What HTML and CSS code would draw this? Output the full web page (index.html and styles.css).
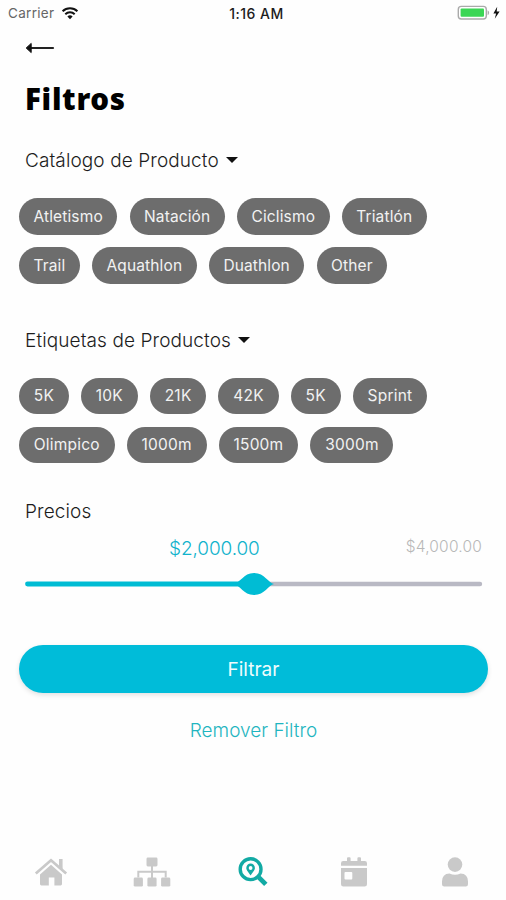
FILE: index.html
```
<!DOCTYPE html>
<html lang="es">
<head>
    <meta charset="UTF-8">
    <meta name="viewport" content="width=device-width, initial-scale=1.0">
    <title>Filtros</title>
    <link rel="stylesheet" href="styles.css">
</head>
<body>
    <div class="status-bar">
        <div class="status-left">
            <span class="carrier">Carrier</span>
            <svg class="wifi" width="18" height="14" viewBox="0 0 18 14">
                <path d="M1.6 5.2a10.6 10.6 0 0 1 14.8 0M4.3 8.2a6.8 6.8 0 0 1 9.4 0" fill="none" stroke="#111" stroke-width="2"/>
                <path d="M9 13.2l-2.6-2.7a3.7 3.7 0 0 1 5.2 0z" fill="#111"/>
            </svg>
        </div>
        <span class="time">1:16 AM</span>
        <div class="status-right">
            <svg width="44" height="16" viewBox="0 0 44 16">
                <rect x="1.3" y="1.4" width="28" height="12.6" rx="3" fill="#fff" stroke="#aaa" stroke-width="1.4"/>
                <rect x="3.6" y="3.6" width="23.4" height="8.2" rx="1" fill="#3bd655"/>
                <path d="M30.6 5.2q1.5.8 1.5 2.5t-1.5 2.5z" fill="#aaa"/>
                <path d="M40.2 1.8L36.4 8.4h2.7l-1.3 5.4 4.8-7.2h-2.9z" fill="#111"/>
            </svg>
        </div>
    </div>

    <main class="content">
        <a href="#" class="back" aria-label="Volver">
            <svg width="30" height="12" viewBox="0 0 30 12">
                <path d="M5 6h23" stroke="#222" stroke-width="2.2" stroke-linecap="round"/>
                <path d="M1.2 6L6.2 1.4v9.2z" fill="#111" stroke="#111" stroke-linejoin="round"/>
            </svg>
        </a>

        <h1 class="title">Filtros</h1>

        <section class="group">
            <h2 class="group-title">Catálogo de Producto <span class="caret"></span></h2>
            <div class="chips">
                <button class="chip">Atletismo</button>
                <button class="chip">Natación</button>
                <button class="chip">Ciclismo</button>
                <button class="chip">Triatlón</button>
                <button class="chip">Trail</button>
                <button class="chip">Aquathlon</button>
                <button class="chip">Duathlon</button>
                <button class="chip">Other</button>
            </div>
        </section>

        <section class="group tags">
            <h2 class="group-title">Etiquetas de Productos <span class="caret"></span></h2>
            <div class="chips">
                <button class="chip">5K</button>
                <button class="chip">10K</button>
                <button class="chip">21K</button>
                <button class="chip">42K</button>
                <button class="chip">5K</button>
                <button class="chip">Sprint</button>
                <button class="chip">Olimpico</button>
                <button class="chip">1000m</button>
                <button class="chip">1500m</button>
                <button class="chip">3000m</button>
            </div>
        </section>

        <section class="prices">
            <h2 class="group-title">Precios</h2>
            <div class="price-labels">
                <span class="price-current">$2,000.00</span>
                <span class="price-max">$4,000.00</span>
            </div>
            <svg class="slider" width="458" height="24" viewBox="0 0 458 24">
                <path d="M229 12h226" stroke="#b9b9c4" stroke-width="4.4" stroke-linecap="round"/>
                <path d="M2.5 12h226" stroke="#00bcd4" stroke-width="4.8" stroke-linecap="round"/>
                <path d="M208 12C216 11 218 1 229 1s14 10 20 11c-6 1-9 11-20 11s-13-10-21-11z" fill="#00bcd4"/>
            </svg>
        </section>

        <button class="apply">Filtrar</button>
        <a href="#" class="remove">Remover Filtro</a>
    </main>

    <nav class="tab-bar">
        <a href="#" class="tab" aria-label="Inicio">
            <svg width="34" height="32" viewBox="0 0 34 32">
                <path d="M1.8 17.5L17 4.2l15.2 13.3" fill="none" stroke="currentColor" stroke-width="2.7"/>
                <path d="M25 3h3.6v10.5L25 10.4z" fill="currentColor"/>
                <path d="M17 8.8l11 9.6V28q0 1.4-1.4 1.4h-6.2v-8h-5.6v8H7.4Q6 29.4 6 28v-9.6z" fill="currentColor"/>
            </svg>
        </a>
        <a href="#" class="tab" aria-label="Categorías">
            <svg width="38" height="32" viewBox="0 0 38 32">
                <rect x="13.5" y="1.5" width="11" height="9" rx="1.4" fill="currentColor"/>
                <path d="M19 10v12M5.3 21.5v-5.8h27.4v5.8" fill="none" stroke="currentColor" stroke-width="2"/>
                <rect x=".7" y="21.6" width="9.2" height="9" rx="1.4" fill="currentColor"/>
                <rect x="14.4" y="21.6" width="9.2" height="9" rx="1.4" fill="currentColor"/>
                <rect x="28.1" y="21.6" width="9.2" height="9" rx="1.4" fill="currentColor"/>
            </svg>
        </a>
        <a href="#" class="tab active" aria-label="Buscar">
            <svg width="30" height="32" viewBox="0 0 30 32">
                <circle cx="12.6" cy="13.2" r="10.4" fill="none" stroke="currentColor" stroke-width="3.4"/>
                <path d="M20.8 21.4l7 7" stroke="currentColor" stroke-width="4.8"/>
                <path fill-rule="evenodd" d="M12.6 7.6a4.3 4.3 0 0 1 4.3 4.3c0 2.6-2.6 4.3-4.3 7.6-1.7-3.3-4.3-5-4.3-7.6a4.3 4.3 0 0 1 4.3-4.3zm0 2.5a1.9 1.9 0 1 0 0 3.8 1.9 1.9 0 0 0 0-3.8z" fill="currentColor"/>
            </svg>
        </a>
        <a href="#" class="tab" aria-label="Eventos">
            <svg width="28" height="32" viewBox="0 0 28 32">
                <path d="M1 9.8V7.2Q1 5 3.2 5H7V2.3Q7 1.3 8 1.3h1.6q1 0 1 1V5h6.8V2.3q0-1 1-1H20q1 0 1 1V5h3.8Q27 5 27 7.2v2.6z" fill="currentColor"/>
                <path fill-rule="evenodd" d="M1 12h26v16.2q0 2.4-2.4 2.4H3.4Q1 30.6 1 28.2zM5.4 16q-.9 0-.9.9v5.6q0 .9.9.9h6q.9 0 .9-.9v-5.6q0-.9-.9-.9z" fill="currentColor"/>
            </svg>
        </a>
        <a href="#" class="tab" aria-label="Perfil">
            <svg width="28" height="32" viewBox="0 0 28 32">
                <circle cx="14" cy="8.6" r="7.3" fill="currentColor"/>
                <path d="M8.5 17.5q5.5 2.4 11 0Q27 17.8 27 25.5v2.8q0 2.3-2.3 2.3H3.3Q1 30.6 1 28.3v-2.8q0-7.7 7.5-8z" fill="currentColor"/>
            </svg>
        </a>
    </nav>
</body>
</html>
```
FILE: styles.css
```
* {
    margin: 0;
    padding: 0;
    box-sizing: border-box;
}

body {
    display: flex;
    flex-direction: column;
    width: 506px;
    height: 900px;
    background-color: #fefefe;
    color: #1c1c1c;
    font-family: Inter, "Liberation Sans", sans-serif;
    overflow: hidden;
}

a {
    text-decoration: none;
}

svg {
    display: block;
}

button {
    border: none;
    font-family: inherit;
    cursor: pointer;
}

.status-bar {
    display: grid;
    grid-template-columns: 1fr auto 1fr;
    align-items: center;
    height: 26px;
    padding: 0 5px 0 8px;
    font-size: 13.5px;
}

.status-left {
    display: flex;
    align-items: center;
    gap: 7px;
}

.carrier {
    color: #666;
    letter-spacing: 0.3px;
}

.time {
    padding-left: 4px;
    font-size: 14px;
    font-weight: 500;
    letter-spacing: 0.5px;
}

.status-right {
    display: flex;
    justify-content: flex-end;
}

.content {
    display: flex;
    flex-direction: column;
    padding: 0 18px 0 19px;
}

.back {
    margin: 16px 0 0 6px;
}

.title {
    margin: 24px 0 0 6px;
    font-family: "Noto Sans", sans-serif;
    font-size: 29.5px;
    font-weight: 900;
    line-height: 42px;
    letter-spacing: 0.7px;
    color: #000;
}

.group {
    margin-top: 29px;
}

.group-title {
    display: flex;
    align-items: center;
    gap: 7px;
    margin-left: 6px;
    font-size: 19px;
    font-weight: 300;
    line-height: 24px;
    letter-spacing: 0.1px;
}

.caret {
    margin-top: -2px;
    border: 6px solid transparent;
    border-top: 6px solid #111;
    border-bottom: none;
}

.chips {
    display: flex;
    flex-wrap: wrap;
    gap: 12.5px 12.2px;
    width: 420px;
    margin-top: 25px;
}

.chip {
    height: 36.5px;
    padding: 0 14.5px;
    border-radius: 19px;
    background-color: #6d6d6d;
    color: #f2f2f2;
    font-size: 15.5px;
    letter-spacing: 0.13px;
}

.tags {
    margin-top: 45px;
}

.tags .chip {
    padding: 0 14.8px;
    letter-spacing: 0.2px;
}

.prices {
    margin-top: 37px;
}

.price-labels {
    display: grid;
    grid-template-columns: 1fr auto;
    align-items: center;
    height: 24px;
    margin: 12px 6px 0 150px;
}

.price-current {
    color: #11b3cc;
    font-size: 19px;
    font-weight: 300;
    letter-spacing: -0.1px;
}

.price-max {
    padding-bottom: 4px;
    color: #b8b8b8;
    font-size: 15.5px;
    font-weight: 300;
    letter-spacing: 0.2px;
}

.slider {
    margin: 12px 0 0 6px;
}

.apply {
    height: 48px;
    margin-top: 49px;
    border-radius: 24px;
    background-color: #00bcd9;
    box-shadow: 0 2px 5px rgba(0, 0, 0, 0.12);
    color: #effcfd;
    font-size: 19px;
}

.remove {
    margin-top: 26px;
    color: #1fb5c0;
    font-size: 19px;
    font-weight: 300;
    line-height: 24px;
    text-align: center;
}

.tab-bar {
    display: flex;
    margin-top: auto;
    height: 44px;
}

.tab {
    display: flex;
    flex: 1;
    justify-content: center;
    color: #c9c9c9;
}

.tab.active {
    color: #12aaa4;
}
```
